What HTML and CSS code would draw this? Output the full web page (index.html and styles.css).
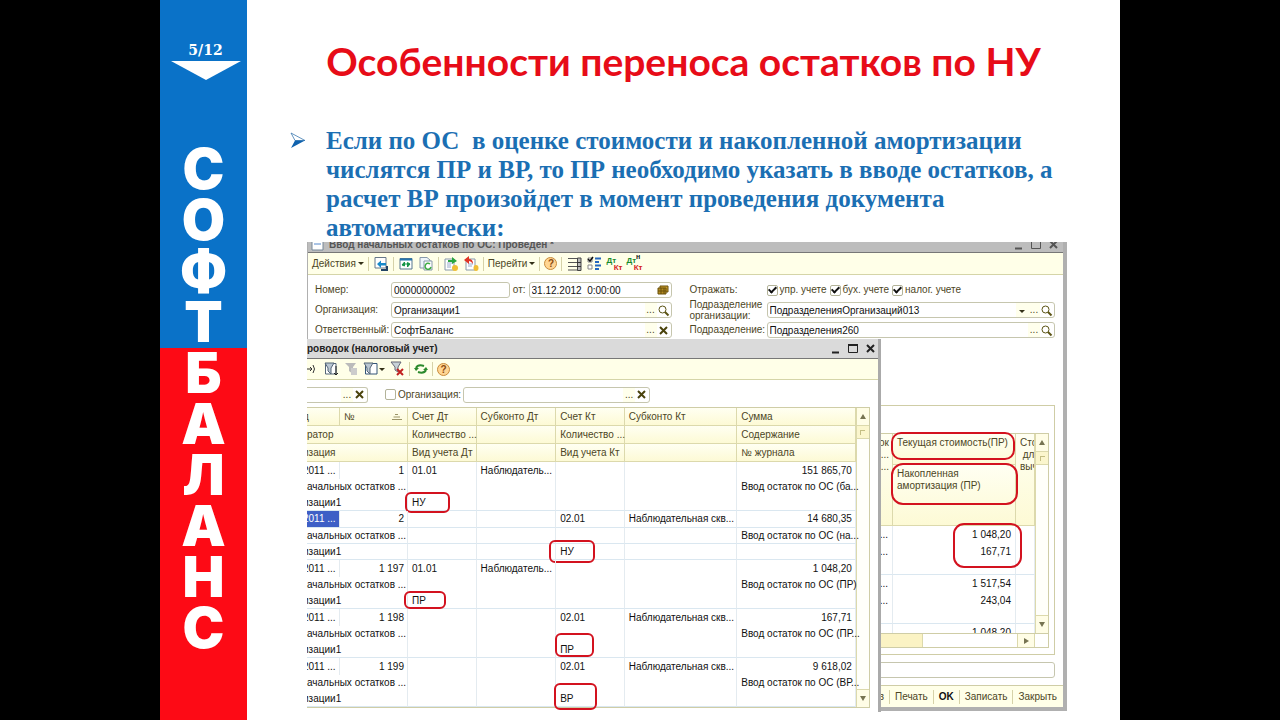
FILE: index.html
```html
<!DOCTYPE html>
<html lang="ru">
<head>
<meta charset="utf-8">
<title>Особенности переноса остатков по НУ</title>
<link rel="stylesheet" href="styles.css">
</head>
<body>
<div class="slide">
  <aside class="brand">
    <div class="brand-top">
      <div class="counter">5/12</div>
      <svg class="arrow" width="70" height="19" viewBox="0 0 70 19"><path d="M0 0H70L35 19Z" fill="#fff"/></svg>
      <div class="word"><span>С</span><span>О</span><span>Ф</span><span>Т</span></div>
    </div>
    <div class="brand-bottom">
      <div class="word"><span>Б</span><span>А</span><span>Л</span><span>А</span><span>Н</span><span>С</span></div>
    </div>
  </aside>
  <main class="content">
    <h1>Особенности переноса остатков по НУ</h1>
    <div class="point">
      <svg width="16" height="17" viewBox="0 0 16 17"><path d="M1 1L15 8.500L5 8.500Z" fill="#fff" stroke="#3b78b0" stroke-width=".8"/><path d="M5 8.500H15L1 16Z" fill="#0f62ae"/></svg>
      <p>Если по ОС&nbsp; в оценке стоимости и накопленной амортизации<br>числятся ПР и ВР, то ПР необходимо указать в вводе остатков, а<br>расчет ВР произойдет в момент проведения документа<br>автоматически:</p>
    </div>

    <div class="desk">
      <section class="win doc">
        <header class="doc-title">
          <svg width="13" height="12" viewBox="0 0 13 12"><path d="M1 0H12V11H1Z" fill="#fff" stroke="#789"/><path d="M3 5H10" stroke="#58c"/></svg>
          <span>Ввод начальных остатков по ОС: Проведен *</span>
          <svg class="controls" width="46" height="12" viewBox="0 0 46 12" fill="none" stroke="#555"><path d="M1 9.500H8" stroke-width="2"/><path d="M17.500 1.500H26.500V9.500H17.500Z"/><path d="M36 2L43 9M43 2L36 9" stroke-width="2"/></svg>
        </header>
        <div class="toolbar">
          <button>Действия <i class="caret"></i></button><i class="sep"></i>
          <svg width="16" height="16" viewBox="0 0 16 16"><path d="M2 1.500H13V12H2Z" fill="#fff" stroke="#678"/><path d="M14 10V14H8" fill="none" stroke="#246" stroke-width="2"/><path d="M4 8L8 4.500V7H13V9.500H8V12Z" fill="#1689c9"/></svg><i class="sep"></i>
          <svg width="16" height="16" viewBox="0 0 16 16"><path d="M2 2.500H14V13H2Z" fill="#fff" stroke="#58778f"/><path d="M2 3.500H14" stroke="#2474ad" stroke-width="2"/><path d="M5 8H11M4 9L6.500 6V10ZM12 8L9.500 6.500V11Z" fill="#159447" stroke="#159447"/></svg>
          <svg width="16" height="16" viewBox="0 0 16 16"><path d="M2 1.500H9L12 4V12H2Z" fill="#eef5fb" stroke="#89a"/><path d="M6 5H14V14H6Z" fill="#fff" stroke="#89a"/><path d="M12 8A3 3 0 1 0 13 11" fill="none" stroke="#3eac45" stroke-width="1.500"/></svg><i class="sep"></i>
          <svg width="16" height="16" viewBox="0 0 16 16"><path d="M2 3H11V14H2Z" fill="#fff" stroke="#89a"/><path d="M4 7H9M4 9H8M4 11H8" stroke="#9ac"/><path d="M5 4H9V1L14 5L9 8V6H5Z" fill="#29a63e"/><ellipse cx="12" cy="12" rx="3" ry="3" fill="#f0bd33"/></svg>
          <svg width="16" height="16" viewBox="0 0 16 16"><path d="M3 3H12V14H3Z" fill="#fff" stroke="#89a"/><path d="M5 8H10M5 10H9" stroke="#9ac"/><path d="M1 4L6 0V3Q10 3 10 8Q8 5 6 5V8Z" fill="#e03424"/><ellipse cx="13" cy="12" rx="2.500" ry="3" fill="#f0bd33"/></svg><i class="sep"></i>
          <button>Перейти <i class="caret"></i></button><i class="sep"></i>
          <button class="help" aria-label="Справка">?</button><i class="sep"></i>
          <svg width="16" height="16" viewBox="0 0 16 16"><path d="M2 2.500H15M2 6.500H15M2 10.500H15M2 14H15" stroke="#555"/><path d="M11.500 2H15V14.500H11.500Z" fill="#bbb" stroke="#444"/><path d="M11 6.500H15M11 10.500H15" stroke="#333"/></svg>
          <svg width="16" height="16" viewBox="0 0 16 16"><path d="M2 2H6V6H2ZM2 9H6V13H2Z" fill="#fff" stroke="#888"/><path d="M2 3L4 5L7 1" fill="none" stroke="#111" stroke-width="1.500"/><path d="M9 2.500H15M9 6H13M9 9.500H15M9 13H13" stroke="#2468c0" stroke-width="2"/></svg>
          <span class="dk"><b>Дт</b><em>Кт</em></span>
          <span class="dk"><b>Дт<sup>н</sup></b><em>Кт</em></span>
        </div>
        <form class="fields">
          <label for="num">Номер:</label>
          <div class="pair">
            <div class="field"><input id="num" value="00000000002"></div>
            <label for="date">от:</label>
            <div class="field wide"><input id="date" value="31.12.2012  0:00:00"><svg width="14" height="12" viewBox="0 0 14 12"><path d="M4 2H12V8H4Z" fill="#c99b2c" stroke="#69510b"/><path d="M2 4H10V10H2Z" fill="#b58b21" stroke="#69510b"/><path d="M2 7H10M5 4V10M8 4V10" stroke="#69510b"/></svg></div>
          </div>
          <span class="gap"></span>
          <span>Отражать:</span>
          <div class="checks">
            <label><input type="checkbox" checked>упр. учете</label>
            <label><input type="checkbox" checked>бух. учете</label>
            <label><input type="checkbox" checked>налог. учете</label>
          </div>

          <label for="org">Организация:</label>
          <div class="field"><input id="org" value="Организации1"><button type="button">...</button><svg width="13" height="13" viewBox="0 0 13 13" fill="none" stroke="#5c5415"><circle cx="5.500" cy="5.500" r="3.500"/><path d="M8 8L11.500 11.500" stroke-width="2"/></svg></div>
          <span class="gap"></span>
          <label for="dep" class="two">Подразделение<br>организации:</label>
          <div class="field"><input id="dep" value="ПодразделенияОрганизаций013"><button type="button" aria-label="Список"><i class="caret"></i></button><button type="button">...</button><svg width="13" height="13" viewBox="0 0 13 13" fill="none" stroke="#5c5415"><circle cx="5.500" cy="5.500" r="3.500"/><path d="M8 8L11.500 11.500" stroke-width="2"/></svg></div>

          <label for="resp">Ответственный:</label>
          <div class="field"><input id="resp" value="СофтБаланс"><button type="button">...</button><svg width="13" height="13" viewBox="0 0 13 13" fill="none" stroke="#4a430c" stroke-width="2"><path d="M3 3L10 10M10 3L3 10"/></svg></div>
          <span class="gap"></span>
          <label for="sub">Подразделение:</label>
          <div class="field"><input id="sub" value="Подразделения260"><button type="button">...</button><svg width="13" height="13" viewBox="0 0 13 13" fill="none" stroke="#5c5415"><circle cx="5.500" cy="5.500" r="3.500"/><path d="M8 8L11.500 11.500" stroke-width="2"/></svg></div>
        </form>

        <div class="panel">
          <div class="sheet">
            <div class="view">
              <table class="costs">
                <colgroup><col><col class="c-cost"><col class="c-last"></colgroup>
                <thead>
                  <tr><th rowspan="2" class="end">ок<br>е...<br>о...</th><th class="h-now">Текущая стоимость(ПР)<i class="mark m-now"></i></th><th rowspan="2" class="clip">Сто<br>&nbsp;для<br>выч</th></tr>
                  <tr><th class="h-acc">Накопленная<br>амортизация (ПР)<i class="mark m-acc"></i></th></tr>
                </thead>
                <tbody>
                  <tr><td>...<br>...</td><td>1 048,20<br>167,71<i class="mark m-sum"></i></td><td></td></tr>
                  <tr><td>...<br>...</td><td>1 517,54<br>243,04</td><td></td></tr>
                  <tr><td></td><td>1 048,20</td><td></td></tr>
                </tbody>
              </table>
            </div>
            <div class="vscroll"><i class="up"></i><i class="thumb"></i><i class="down"></i></div>
            <div class="hscroll"><i class="bar"></i><i class="right"></i></div>
          </div>
        </div>
        <input class="comment" aria-label="Комментарий">
        <footer class="actions">
          <button>ОС-1в</button><i class="sep"></i><button>Печать</button><i class="sep"></i><button class="ok">OK</button><i class="sep"></i><button>Записать</button><i class="sep"></i><button>Закрыть</button>
        </footer>
      </section>

      <section class="win journal">
        <header class="journal-title">
          <span>роводок (налоговый учет)</span>
          <svg class="controls" width="46" height="12" viewBox="0 0 46 12" fill="none" stroke="#222"><path d="M1 9.500H8" stroke-width="2"/><path d="M17.500 1.500H26.500V9.500H17.500Z"/><path d="M17 2H27" stroke-width="2"/><path d="M36 2L43 9M43 2L36 9" stroke-width="2"/></svg>
        </header>
        <div class="toolbar small">
          <svg class="span-icon" width="9" height="16" viewBox="0 0 9 16" fill="none" stroke="#333"><path d="M0 8H5M3 6L5 8L3 10M6 4Q9 8 6 12"/></svg>
          <svg width="16" height="16" viewBox="0 0 16 16"><path d="M2.500 2.500H13V13H2.500Z" fill="#fff" stroke="#567"/><path d="M2 2H11L8 7V13L5 10V7Z" fill="#b9c6d2" stroke="#567"/><path d="M13 5V14M11 12L13 14L15 12" fill="none" stroke="#222"/></svg>
          <svg width="16" height="16" viewBox="0 0 16 16"><path d="M2 2H13L10 6V13L6 10V6Z" fill="#bbb"/><path d="M8 7H14V14H8Z" fill="#ccc"/></svg>
          <span class="menu"><svg width="16" height="16" viewBox="0 0 16 16"><path d="M2.500 2.500H14V13H2.500Z" fill="#fff" stroke="#357"/><path d="M1 2H10L7 7V13L4 10V7Z" fill="#b9c6d2" stroke="#567"/></svg><i class="caret"></i></span>
          <svg width="16" height="16" viewBox="0 0 16 16"><path d="M2 1H12L9 6V11L6 9V6Z" fill="#c8d2d8" stroke="#667"/><path d="M8 8L14 14M14 8L8 14" stroke="#c22020" stroke-width="2"/></svg><i class="sep"></i>
          <svg width="14" height="16" viewBox="0 0 14 16" fill="none" stroke="#2c8a2c" stroke-width="2"><path d="M2 7Q4 3 10 5M12 9Q10 13 4 11"/><path d="M0 7H5L2 10ZM9 9H14L12 6Z" fill="#2c8a2c" stroke="none"/></svg><i class="sep"></i>
          <button class="help" aria-label="Справка">?</button>
        </div>
        <div class="filter">
          <div class="field first"><input aria-label="Период"><button type="button">...</button><svg width="13" height="13" viewBox="0 0 13 13" fill="none" stroke="#4a430c" stroke-width="2"><path d="M3 3L10 10M10 3L3 10"/></svg></div>
          <label><input type="checkbox">Организация:</label>
          <div class="field second"><input aria-label="Организация"><button type="button">...</button><svg width="13" height="13" viewBox="0 0 13 13" fill="none" stroke="#4a430c" stroke-width="2"><path d="M3 3L10 10M10 3L3 10"/></svg></div>
        </div>
        <div class="ledger">
          <table class="entries">
            <colgroup><col class="c-a"><col class="c-b"><col class="c-c"><col class="c-d"><col class="c-c"><col class="c-e"><col class="c-f"></colgroup>
            <thead>
              <tr><th class="cut">д</th><th class="num">№ <svg width="12" height="8" viewBox="0 0 12 8"><path d="M4 1.500H7M2.500 4H9M1 6.500H11" stroke="#9b9468"/></svg></th><th>Счет Дт</th><th>Субконто Дт</th><th>Счет Кт</th><th>Субконто Кт</th><th>Сумма</th></tr>
              <tr><th class="edge" colspan="2">ратор</th><th>Количество ...</th><th></th><th>Количество ...</th><th></th><th>Содержание</th></tr>
              <tr><th class="cut" colspan="2">изация</th><th>Вид учета Дт</th><th></th><th>Вид учета Кт</th><th></th><th>№ журнала</th></tr>
            </thead>
            <tbody>
              <tr><td class="cut">2011 ...</td><td class="n">1</td><td>01.01</td><td>Наблюдатель...</td><td></td><td></td><td class="n">151 865,70</td></tr>
              <tr><td class="edge" colspan="2">ачальных остатков ...</td><td></td><td></td><td></td><td></td><td>Ввод остаток по ОС (ба...</td></tr>
              <tr><td class="cut" colspan="2">изации1</td><td>НУ<i class="mark m-a"></i></td><td></td><td></td><td></td><td></td></tr>
            </tbody>
            <tbody class="current">
              <tr><td class="cut picked">2011 ...</td><td class="n">2</td><td></td><td></td><td>02.01</td><td>Наблюдательная скв...</td><td class="n">14 680,35</td></tr>
              <tr><td class="edge" colspan="2">ачальных остатков ...</td><td></td><td></td><td></td><td></td><td>Ввод остаток по ОС (на...</td></tr>
              <tr><td class="cut" colspan="2">изации1</td><td></td><td></td><td>НУ<i class="mark m-b"></i></td><td></td><td></td></tr>
            </tbody>
            <tbody>
              <tr><td class="cut">2011 ...</td><td class="n">1 197</td><td>01.01</td><td>Наблюдатель...</td><td></td><td></td><td class="n">1 048,20</td></tr>
              <tr><td class="edge" colspan="2">ачальных остатков ...</td><td></td><td></td><td></td><td></td><td>Ввод остаток по ОС (ПР)</td></tr>
              <tr><td class="cut" colspan="2">изации1</td><td>ПР<i class="mark m-c"></i></td><td></td><td></td><td></td><td></td></tr>
            </tbody>
            <tbody>
              <tr><td class="cut">2011 ...</td><td class="n">1 198</td><td></td><td></td><td>02.01</td><td>Наблюдательная скв...</td><td class="n">167,71</td></tr>
              <tr><td class="edge" colspan="2">ачальных остатков ...</td><td></td><td></td><td></td><td></td><td>Ввод остаток по ОС (ПР...</td></tr>
              <tr><td class="cut" colspan="2">изации1</td><td></td><td></td><td>ПР<i class="mark m-d"></i></td><td></td><td></td></tr>
            </tbody>
            <tbody>
              <tr><td class="cut">2011 ...</td><td class="n">1 199</td><td></td><td></td><td>02.01</td><td>Наблюдательная скв...</td><td class="n">9 618,02</td></tr>
              <tr><td class="edge" colspan="2">ачальных остатков ...</td><td></td><td></td><td></td><td></td><td>Ввод остаток по ОС (ВР...</td></tr>
              <tr><td class="cut" colspan="2">изации1</td><td></td><td></td><td>ВР<i class="mark m-e"></i></td><td></td><td></td></tr>
            </tbody>
          </table>
          <div class="vscroll"><i class="up"></i><i class="thumb"></i><i class="down"></i></div>
        </div>
      </section>
    </div>
  </main>
</div>
</body>
</html>
```

FILE: styles.css
```css
* { box-sizing: border-box; }
body { margin: 0; background: #000; }
i { font-style: normal; }
svg { flex: none; display: block; }

/* Slide */
.slide { display: flex; width: 75%; min-height: 100vh; margin: 0 auto; background: #fff; }
.brand { display: flex; flex-direction: column; flex: none; width: 87px; color: #fff; }
.brand-top { display: flex; flex-direction: column; align-items: center; padding-top: 40px; background: #0a72c8; }
.brand-bottom { flex: 1; background: #fd0a15; }
.counter { margin-left: 4px; font: bold 14px/21px "DejaVu Serif", serif; }
.arrow { margin: 0 0 64px 5px; }
.word { font: 900 56px/51px Inter, "DejaVu Sans", sans-serif; text-align: center; }
.word span { display: block; }
.content { flex: 1; min-width: 0; padding-bottom: 10px; }
h1 { margin: 0; padding: 36px 0 40px; color: #e70c18; text-align: center; font: bold 39px/50px Lato, "Open Sans", sans-serif; white-space: nowrap; }
.point { display: flex; gap: 20px; padding-left: 43px; color: #1b6fb3; }
.point svg { margin-top: 6px; }
.point p { margin: 0; font: bold 25px/29px "Liberation Serif", serif; white-space: nowrap; }

/* Windows */
.desk { position: relative; margin: 0 53px 0 60px; font: 10px/12px "Liberation Sans", sans-serif; color: #4d4625; }
.win button { border: 0; padding: 0; background: none; color: #4d4625; font: inherit; }
.win input { font: inherit; color: #111; }
.doc { border: solid #b0b0b0; border-width: 0 4px 4px 1px; background: #fff; }
.doc-title { display: flex; align-items: center; gap: 5px; height: 11px; overflow: hidden; padding: 0 3px; background: #bdbdbd; border-bottom: 1px solid #777; color: #555; font-weight: bold; }
.doc-title > * { margin-top: -5px; }
.controls { margin-left: auto; }
.toolbar { display: flex; align-items: center; gap: 4px; height: 22px; padding: 0 4px; background: #ffffe8; border-bottom: 1px solid #d5d5a8; }
.toolbar button { display: flex; align-items: center; gap: 2px; }
.toolbar.small { height: 21px; padding: 0; }
.span-icon { margin-right: 3px; }
.sep { width: 1px; height: 14px; background: #d6d2a8; }
.caret { display: inline-block; border: 3px solid transparent; border-top-color: #333018; border-bottom: 0; }
.win .help { display: flex; justify-content: center; width: 13px; height: 13px; border: 1px solid #c88b3c; border-radius: 50%; background: #ffd592; color: #8a4a10; line-height: 11px; font-weight: bold; }
.menu { display: flex; align-items: center; }
.dk { display: grid; width: 16px; font: bold 8px/7px "Liberation Sans", sans-serif; white-space: nowrap; }
.dk b { color: #198a2e; }
.dk em { color: #d62222; font-style: normal; text-align: right; }
.dk sup { color: #111; font-size: 7px; line-height: 1px; }

/* Document form */
.fields { display: grid; grid-template-columns: 76px 281fr 18px 77px 289fr; grid-auto-rows: 16px; row-gap: 4px; align-items: center; padding: 7px 8px 0 7px; }
.two { line-height: 11px; margin: -4px 0; }
.field { display: flex; align-items: center; height: 16px; border: 1px solid #c6c6ae; border-radius: 3px; background: #fff; padding-right: 1px; }
.field input { flex: 1; min-width: 0; width: 0; height: 14px; border: 0; padding: 0 2px; background: none; outline: 0; }
.field button { width: 12px; height: 14px; background: #ffffec; }
.pair { display: flex; gap: 3px; align-items: center; }
.pair .field { flex: 120; min-width: 0; }
.pair .wide { flex: 145; }
.checks { display: flex; gap: 3px; white-space: nowrap; }
.checks label, .filter label { display: flex; align-items: center; gap: 2px; }
input[type="checkbox"] { appearance: none; display: grid; place-items: center; width: 11px; height: 11px; margin: 0; border: 1px solid #b3b399; border-radius: 2px; background: #fff; }
input[type="checkbox"]:checked::after { content: ""; width: 3px; height: 6px; margin-top: -2px; border: solid #111; border-width: 0 2px 2px 0; transform: rotate(45deg); }

/* Cost table */
.panel { margin: 67px 8px 0 0; padding: 27px 5px 6px 0; border: 1px solid #cfcda6; }
.sheet { display: grid; grid-template-columns: 1fr 13px; border: 1px solid #cfcda6; }
.view { height: 202px; margin-top: -3px; padding-top: 3px; overflow: hidden; }
table { width: 100%; table-layout: fixed; border-collapse: separate; border-spacing: 0; }
th { font-weight: normal; text-align: left; background: linear-gradient(#fffff2, #fdfad5); border-right: 1px solid #dcd9ac; border-bottom: 1px solid #dcd9ac; }
th, td { position: relative; padding: 0 4px; white-space: nowrap; }
td { color: #111; border-right: 1px solid #e4ebf0; }
.costs th { vertical-align: top; padding: 3px 4px; line-height: 12px; }
.costs td { height: 49px; vertical-align: top; text-align: right; line-height: 17px; border-bottom: 1px solid #dae7f0; }
.costs .end { text-align: right; padding-right: 3px; }
.c-cost { width: 123px; }
.c-last { width: 19px; }
.costs .clip { overflow: hidden; }
.h-now { height: 31px; }
.h-acc { height: 61px; }
.vscroll { display: flex; flex-direction: column; background: #fffffa; border-left: 1px solid #dcd9ac; }
.vscroll i { display: grid; place-items: center; height: 18px; background: #fffde6; border-bottom: 1px solid #dcd9ac; }
.vscroll i::after { content: ""; border: 3px solid transparent; border-bottom: 5px solid #777452; border-top: 0; }
.vscroll .thumb { height: 13px; background: #fbf6cd; }
.vscroll .thumb::after { width: 4px; height: 4px; border: solid #c4be84; border-width: 1px 0 0 1px; }
.vscroll .down { margin-top: auto; border-top: 1px solid #dcd9ac; border-bottom: 0; }
.vscroll .down::after { border: 3px solid transparent; border-top: 5px solid #777452; border-bottom: 0; }
.hscroll { grid-column: 1 / 3; display: flex; justify-content: space-between; height: 14px; border-top: 1px solid #cfcda6; }
.hscroll .bar { width: 83%; background: #fbf3c4; border-right: 1px solid #dcd9ac; }
.hscroll .right { display: grid; place-items: center; width: 18px; margin-right: 13px; background: #fffde6; border: solid #dcd9ac; border-width: 0 1px; }
.hscroll .right::after { content: ""; border: 3px solid transparent; border-left: 5px solid #777452; border-right: 0; }
.win .comment { display: block; width: calc(100% - 8px); height: 16px; margin: 7px 0; border: 1px solid #c6c6ae; border-radius: 3px; }
.actions { display: flex; justify-content: flex-end; align-items: center; gap: 5px; height: 22px; padding-right: 6px; background: #ffffe8; border-top: 1px solid #cfcda6; }
.win .ok { color: #111; font-weight: bold; }

/* Journal window */
.journal { position: absolute; left: 0; top: 97px; width: 75.5%; padding-bottom: 4px; border: solid #aaa; border-width: 0 3px 0 0; background: #fff; }
.journal-title { display: flex; align-items: center; height: 20px; padding-right: 1px; background: #dadada; border-bottom: 1px solid #777; color: #222; font-weight: bold; }
.filter { display: flex; align-items: center; height: 27px; padding-top: 2px; }
.filter .first { width: 61px; border-left: 0; border-radius: 0 3px 3px 0; margin-right: 17px; }
.filter .second { width: 187px; margin-left: 2px; }
.ledger { display: grid; grid-template-columns: 1fr 13px; margin-right: 8px; border: solid #cfcda6; border-width: 1px 1px 1px 0; }
.c-a { width: 33px; } .c-b { width: 68px; } .c-c { width: 12.5%; } .c-d { width: 14.5%; } .c-e { width: 20.5%; }
.entries th { height: 18px; }
.entries td { height: 16px; line-height: 12px; }
.entries tr:first-child td { height: 17px; }
.entries tbody tr:last-child td, .entries .current td { border-bottom: 1px solid #dae7f0; }
.entries .n { text-align: right; padding-right: 3px; }
.entries .num svg { position: absolute; right: 4px; top: 5px; }
.entries .edge { padding: 0; }
.entries .cut { padding: 0; text-indent: -4px; overflow: hidden; }
.entries .picked { background: #3e5fc6; color: #fff; }

/* Red call-outs drawn over the cells */
.mark { position: absolute; border: 2px solid #d3121f; border-radius: 6px; }
.m-now { left: -2px; right: 0; top: -2px; height: 28px; border-radius: 10px; }
.m-acc { left: -2px; right: -3px; top: -2px; height: 42px; border-radius: 12px; }
.m-sum { right: -7px; top: -3px; width: 69px; height: 45px; border-radius: 11px; }
.m-a { left: -3px; top: -3px; width: 45px; height: 21px; }
.m-b { left: -7px; top: -4px; width: 46px; height: 23px; }
.m-c { left: -4px; top: -2px; width: 42px; height: 18px; }
.m-d { left: -1px; top: -9px; width: 39px; height: 24px; }
.m-e { left: -2px; top: -8px; width: 43px; height: 27px; }
```
